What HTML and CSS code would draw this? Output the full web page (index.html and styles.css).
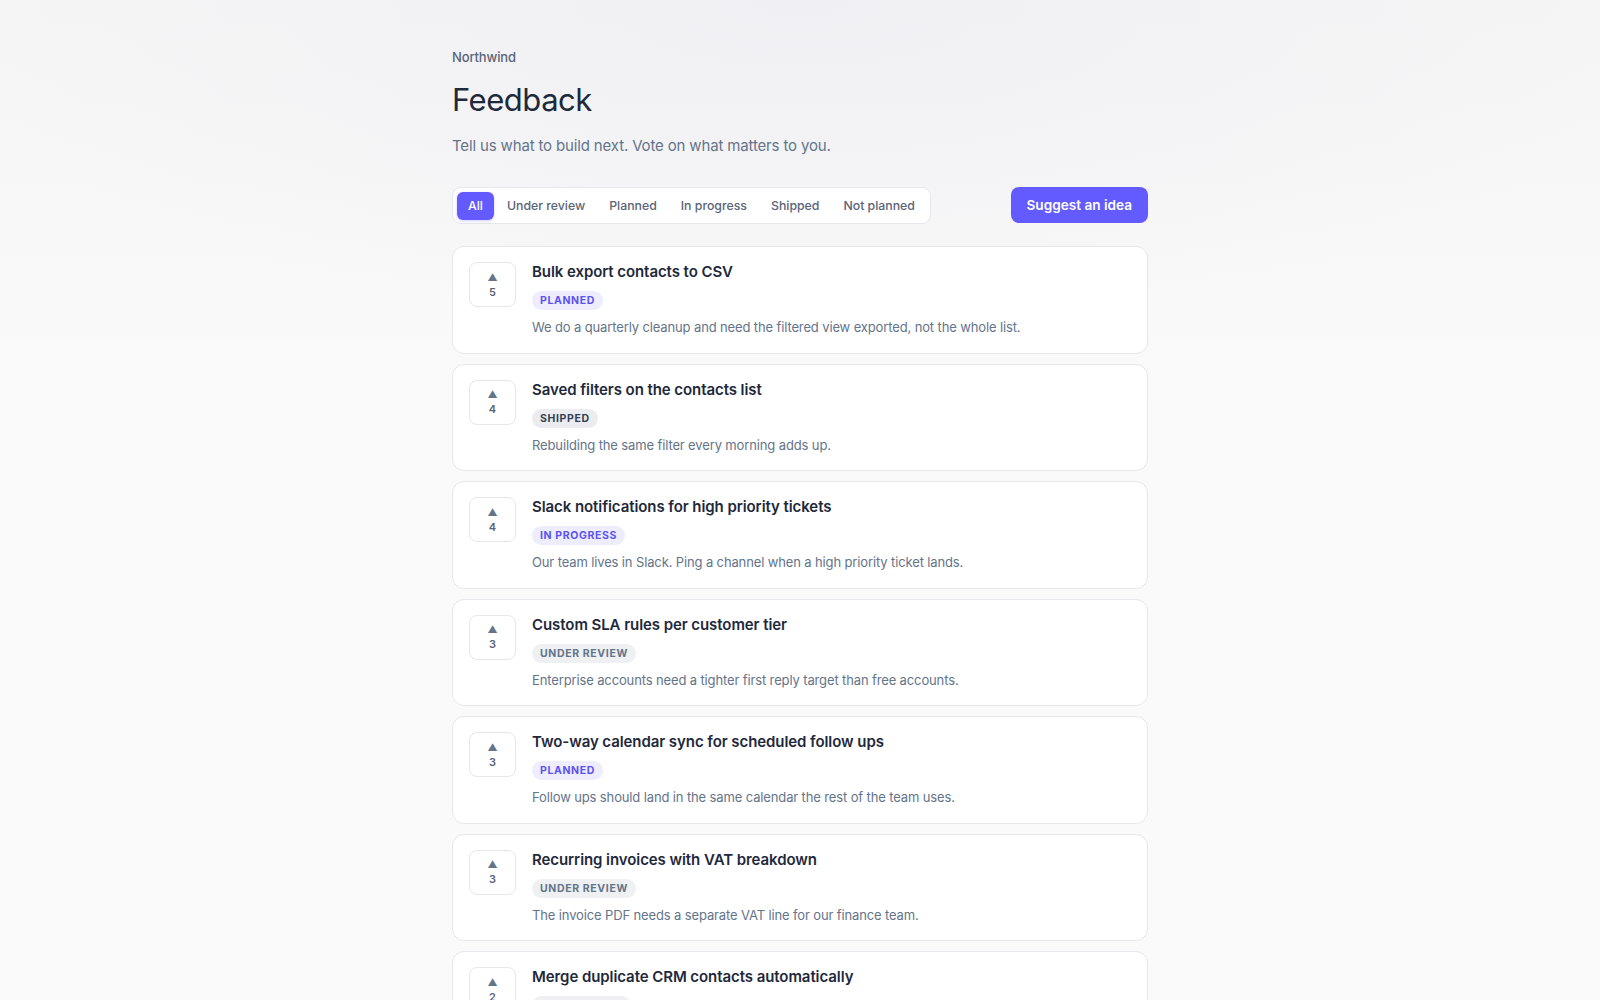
FILE: index.html
```html
<!DOCTYPE html>
<html lang="en">
<head>
<meta charset="utf-8">
<title>Feedback · Northwind</title>
<link rel="stylesheet" href="styles.css">
</head>
<body>
<main class="page">
  <header class="head">
    <div class="brand">Northwind</div>
    <h1 class="title">Feedback</h1>
    <p class="lead">Tell us what to build next. Vote on what matters to you.</p>
  </header>

  <div class="toolbar">
    <nav class="tabs">
      <button class="tab active">All</button>
      <button class="tab">Under review</button>
      <button class="tab">Planned</button>
      <button class="tab">In progress</button>
      <button class="tab">Shipped</button>
      <button class="tab">Not planned</button>
    </nav>
    <button class="suggest">Suggest an idea</button>
  </div>

  <ul class="list">
    <li class="card">
      <button class="vote"><span class="arrow">▲</span><span class="count">5</span></button>
      <div class="body">
        <h2 class="card-title">Bulk export contacts to CSV</h2>
        <span class="badge planned">PLANNED</span>
        <p class="desc">We do a quarterly cleanup and need the filtered view exported, not the whole list.</p>
      </div>
    </li>
    <li class="card">
      <button class="vote"><span class="arrow">▲</span><span class="count">4</span></button>
      <div class="body">
        <h2 class="card-title">Saved filters on the contacts list</h2>
        <span class="badge shipped">SHIPPED</span>
        <p class="desc">Rebuilding the same filter every morning adds up.</p>
      </div>
    </li>
    <li class="card">
      <button class="vote"><span class="arrow">▲</span><span class="count">4</span></button>
      <div class="body">
        <h2 class="card-title">Slack notifications for high priority tickets</h2>
        <span class="badge planned">IN PROGRESS</span>
        <p class="desc">Our team lives in Slack. Ping a channel when a high priority ticket lands.</p>
      </div>
    </li>
    <li class="card">
      <button class="vote"><span class="arrow">▲</span><span class="count">3</span></button>
      <div class="body">
        <h2 class="card-title">Custom SLA rules per customer tier</h2>
        <span class="badge review">UNDER REVIEW</span>
        <p class="desc">Enterprise accounts need a tighter first reply target than free accounts.</p>
      </div>
    </li>
    <li class="card">
      <button class="vote"><span class="arrow">▲</span><span class="count">3</span></button>
      <div class="body">
        <h2 class="card-title">Two-way calendar sync for scheduled follow ups</h2>
        <span class="badge planned">PLANNED</span>
        <p class="desc">Follow ups should land in the same calendar the rest of the team uses.</p>
      </div>
    </li>
    <li class="card">
      <button class="vote"><span class="arrow">▲</span><span class="count">3</span></button>
      <div class="body">
        <h2 class="card-title">Recurring invoices with VAT breakdown</h2>
        <span class="badge review">UNDER REVIEW</span>
        <p class="desc">The invoice PDF needs a separate VAT line for our finance team.</p>
      </div>
    </li>
    <li class="card">
      <button class="vote"><span class="arrow">▲</span><span class="count">2</span></button>
      <div class="body">
        <h2 class="card-title">Merge duplicate CRM contacts automatically</h2>
        <span class="badge review">NOT PLANNED</span>
        <p class="desc">Imports from our web form keep creating duplicates of existing contacts.</p>
      </div>
    </li>
  </ul>
</main>
</body>
</html>
```

FILE: styles.css
```css
* { box-sizing: border-box; }

html, body { margin: 0; padding: 0; }

body {
  font-family: "Inter", "Liberation Sans", sans-serif;
  color: #1e293b;
  min-height: 100vh;
  background:
    radial-gradient(ellipse 900px 320px at 50% 0%, #f0f0f4 0%, rgba(240,240,244,0) 100%),
    linear-gradient(#f5f5f5, #fafafa 400px);
  background-color: #fafafa;
  -webkit-font-smoothing: antialiased;
}

.page {
  width: 696px;
  margin: 0 auto;
  padding-top: 48px;
}

.brand {
  font-size: 13px;
  font-weight: 500;
  color: #5b6478;
  line-height: 18px;
  letter-spacing: -0.01em;
}

.title {
  margin: 13px 0 0;
  font-size: 31px;
  font-weight: 400;
  letter-spacing: -0.015em;
  line-height: 42px;
  color: #1e293b;
}

.lead {
  margin: 14px 0 0;
  font-size: 15px;
  letter-spacing: -0.01em;
  line-height: 22px;
  color: #64748b;
}

.toolbar {
  margin-top: 30px;
  display: flex;
  justify-content: space-between;
  align-items: flex-start;
}

.tabs {
  display: flex;
  align-items: center;
  gap: 2px;
  padding: 4px;
  height: 37px;
  background: #fff;
  border: 1px solid #e5e7eb;
  border-radius: 9px;
}

.tab {
  font: inherit;
  font-size: 12.3px;
  font-weight: 500;
  color: #5b6478;
  background: transparent;
  border: 0;
  border-radius: 6px;
  height: 28px;
  padding: 0 11px;
  cursor: pointer;
}

.tab.active {
  background: #635bff;
  color: #fff;
  box-shadow: 0 1px 3px rgba(99, 91, 255, 0.3);
}

.suggest {
  font: inherit;
  font-size: 13.6px;
  font-weight: 600;
  color: #fff;
  background: #635bff;
  border: 0;
  border-radius: 8px;
  height: 36px;
  padding: 0 16px;
  cursor: pointer;
}

.list {
  list-style: none;
  margin: 22px 0 0;
  padding: 0;
  display: flex;
  flex-direction: column;
  gap: 10px;
}

.card {
  display: flex;
  gap: 16px;
  padding: 15px 16px 15.5px 16px;
  background: #fff;
  border: 1px solid #e5e7eb;
  border-radius: 12px;
}

.vote {
  flex: 0 0 auto;
  width: 47px;
  height: 45px;
  display: flex;
  flex-direction: column;
  align-items: center;
  justify-content: center;
  gap: 2px;
  font: inherit;
  background: #fff;
  border: 1px solid #e5e7eb;
  border-radius: 8px;
  padding: 0;
  color: #64748b;
  cursor: pointer;
}

.arrow {
  font-size: 10px;
  line-height: 12px;
  color: #64748b;
}

.count {
  font-size: 11px;
  font-weight: 600;
  line-height: 14px;
  color: #5b6478;
}

.body {
  display: flex;
  flex-direction: column;
  align-items: flex-start;
  min-width: 0;
}

.card-title {
  margin: 0;
  font-size: 15px;
  font-weight: 600;
  line-height: 20px;
  letter-spacing: -0.005em;
  color: #1e293b;
}

.badge {
  margin-top: 9px;
  display: inline-block;
  font-size: 10.5px;
  font-weight: 700;
  letter-spacing: 0.06em;
  line-height: 19px;
  padding: 0 8px;
  border-radius: 999px;
}

.badge.planned { background: #ededfe; color: #5b53f0; }
.badge.shipped { background: #ebecef; color: #334155; }
.badge.review  { background: #eef0f2; color: #64748b; }

.desc {
  margin: 7px 0 0;
  font-size: 13px;
  letter-spacing: -0.01em;
  line-height: 20px;
  color: #64748b;
}
```
